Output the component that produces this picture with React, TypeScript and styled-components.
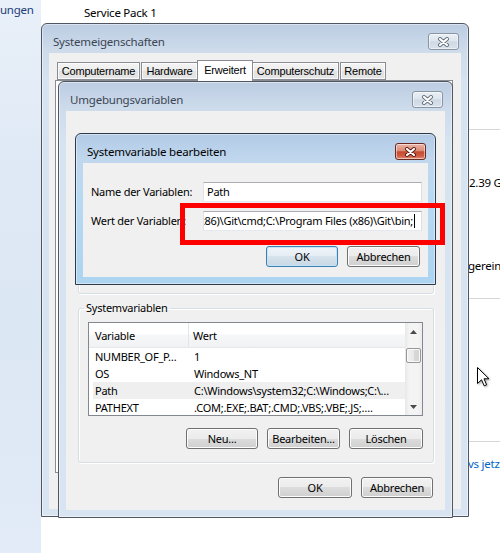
import React from "react";
import styled, { createGlobalStyle } from "styled-components";

const UI_FONT = `"Noto Sans", "Open Sans", sans-serif`;
const TAB_FONT = `"Liberation Sans", Arial, sans-serif`;

const INACTIVE_BG = `linear-gradient(180deg, #bccde2 0px, #cddbeb 26px, #d6e3f1 60px, #d8e4f2 100%)`;
const ACTIVE_BG = `linear-gradient(180deg, #b2cae5 0px, #c0d7ee 26px, #b9d9f2 60px, #acd4f0 100%)`;

const GlobalStyle = createGlobalStyle`
  *, *::before, *::after { box-sizing: border-box; }
  html, body { margin: 0; padding: 0; background: #ffffff; }
  body { font-family: ${UI_FONT}; font-size: 11px; letter-spacing: -0.25px; color: #000; }
`;

const Desktop = styled.div`
  position: relative;
  width: 500px;
  height: 553px;
  overflow: hidden;
  display: grid;
  grid-template-columns: 41px 1fr;
  background: #ffffff;
`;

const NavPane = styled.nav`
  background: linear-gradient(180deg, #e9f0f9 0%, #dfe9f5 30%, #dce7f4 60%, #e2ebf7 100%);
  padding-top: 2px;
  overflow: hidden;
`;

const NavLink = styled.span`
  display: block;
  font-size: 11.5px;
  line-height: 16px;
  color: #1e3c78;
  white-space: nowrap;
`;

const ContentPane = styled.main`
  display: grid;
  grid-template-columns: 1fr 32px;
  grid-template-rows: 129px 169px 143px 1fr;
  min-width: 0;
`;

const ServicePack = styled.div`
  grid-column: 1 / -1;
  padding: 5px 0 0 43px;
  font-size: 11.5px;
  line-height: 16px;
  white-space: nowrap;
`;

const InfoSection = styled.section<{ $pad: number }>`
  grid-column: 2;
  border-top: 1px solid #d6d6d6;
  padding-top: ${(p) => p.$pad}px;
  display: flex;
  flex-direction: column;
  overflow: hidden;
  white-space: nowrap;
`;

const InfoText = styled.span<{ $gap?: number; $link?: boolean; $indent?: number }>`
  font-size: 11.5px;
  line-height: 16px;
  margin-top: ${(p) => p.$gap ?? 0}px;
  padding-left: ${(p) => p.$indent ?? 0}px;
  color: ${(p) => (p.$link ? "#0066cc" : "#000")};
`;

/* ---------- window chrome ---------- */

const WindowFrame = styled.section<{ $x: number; $y: number; $w: number; $h: number; $active?: boolean }>`
  position: absolute;
  left: ${(p) => p.$x}px;
  top: ${(p) => p.$y}px;
  width: ${(p) => p.$w}px;
  height: ${(p) => p.$h}px;
  display: flex;
  flex-direction: column;
  padding: 0 7px 7px;
  border: 1px solid ${(p) => (p.$active ? "#2e3a48" : "#4f565f")};
  border-radius: 6px 6px 0 0;
  background: ${(p) => (p.$active ? ACTIVE_BG : INACTIVE_BG)};
  box-shadow: inset 0 0 0 1px rgba(255, 255, 255, 0.45);
`;

const TitleBar = styled.header`
  height: 29px;
  flex: none;
  display: flex;
  align-items: flex-start;
  justify-content: space-between;
  padding: 0 2px 0 4px;
`;

const Title = styled.h1<{ $active?: boolean }>`
  margin: 10px 0 0;
  font-size: 11.5px;
  letter-spacing: -0.2px;
  line-height: 16px;
  font-weight: normal;
  white-space: nowrap;
  color: ${(p) => (p.$active ? "#000000" : "#3b4553")};
`;

const CloseButton = styled.button<{ $active?: boolean }>`
  width: 31px;
  height: 17px;
  margin-top: 9px;
  padding: 0;
  display: flex;
  align-items: center;
  justify-content: center;
  border: 1px solid ${(p) => (p.$active ? "#6b2a1f" : "#8a95a3")};
  border-radius: 3px;
  background: ${(p) =>
    p.$active
      ? "linear-gradient(180deg, #e9b4a6 0%, #dc8c76 45%, #c54a30 52%, #cf5d43 80%, #e0907a 100%)"
      : "linear-gradient(180deg, #eaeff5 0%, #dde5ee 45%, #cfd9e4 52%, #d9e2ec 100%)"};
  box-shadow: inset 0 0 0 1px rgba(255, 255, 255, 0.5);
`;

const CloseGlyph: React.FC<{ active?: boolean }> = ({ active }) => (
  <svg width="13" height="10" viewBox="0 0 13 10" aria-hidden="true">
    <path
      d="M3 2 L10 8 M10 2 L3 8"
      stroke={active ? "#5a1c12" : "#66717f"}
      strokeWidth="4"
      strokeLinecap="round"
      fill="none"
    />
    <path d="M3 2 L10 8 M10 2 L3 8" stroke="#ffffff" strokeWidth="2.2" strokeLinecap="round" fill="none" />
  </svg>
);

const Client = styled.div`
  flex: 1;
  min-height: 0;
  background: #f0f0f0;
  display: flex;
  flex-direction: column;
`;

type WindowProps = {
  x: number;
  y: number;
  w: number;
  h: number;
  title: string;
  active?: boolean;
  children: React.ReactNode;
};

const Window: React.FC<WindowProps> = ({ x, y, w, h, title, active, children }) => (
  <WindowFrame $x={x} $y={y} $w={w} $h={h} $active={active}>
    <TitleBar>
      <Title $active={active}>{title}</Title>
      <CloseButton $active={active} aria-label="Schließen">
        <CloseGlyph active={active} />
      </CloseButton>
    </TitleBar>
    <Client>{children}</Client>
  </WindowFrame>
);

/* ---------- common controls ---------- */

const ButtonRow = styled.div<{ $gap?: number; $right?: number; $top?: number }>`
  display: flex;
  justify-content: flex-end;
  gap: ${(p) => p.$gap ?? 9}px;
  margin-top: ${(p) => p.$top ?? 0}px;
  margin-right: ${(p) => p.$right ?? 0}px;
  flex: none;
`;

const PushButton = styled.button<{ $w: number; $default?: boolean }>`
  width: ${(p) => p.$w}px;
  height: 21px;
  padding: 0;
  font-family: ${UI_FONT};
  font-size: 11px;
  letter-spacing: -0.25px;
  line-height: 17px;
  color: #000;
  border: 1px solid ${(p) => (p.$default ? "#3c7fb1" : "#707070")};
  border-radius: 3px;
  background: ${(p) =>
    p.$default
      ? "linear-gradient(180deg, #eef4f9 0%, #e5edf4 50%, #d6e2ec 50%, #c9d8e4 100%)"
      : "linear-gradient(180deg, #f2f2f2 0%, #ebebeb 50%, #dddddd 50%, #cfcfcf 100%)"};
  box-shadow: inset 0 0 0 1px ${(p) => (p.$default ? "#c6e4f7" : "#fcfcfc")};
`;

const TextBox = styled.div<{ $alignEnd?: boolean }>`
  height: 20px;
  min-width: 0;
  background: #ffffff;
  border: 1px solid;
  border-color: #abadb3 #dbdfe6 #e3e9ef #e2e3ea;
  display: flex;
  align-items: center;
  justify-content: ${(p) => (p.$alignEnd ? "flex-end" : "flex-start")};
  padding: ${(p) => (p.$alignEnd ? "0 6px 0 3px" : "0 3px")};
  overflow: hidden;
  white-space: nowrap;
`;

const TextValue = styled.span`
  flex: none;
  line-height: 16px;
`;

const Caret = styled.span`
  flex: none;
  width: 1px;
  height: 14px;
  margin-left: 1px;
  background: #000;
`;

/* ---------- tabs (Systemeigenschaften) ---------- */

const SEBody = styled.div`
  flex: 1;
  display: flex;
  flex-direction: column;
  padding: 7px 5px 10px 6px;
`;

const TabStrip = styled.div`
  height: 20px;
  flex: none;
  display: flex;
  align-items: flex-end;
  gap: 1px;
  padding-left: 2px;
  position: relative;
  z-index: 1;
`;

const Tab = styled.div<{ $w: number; $selected?: boolean }>`
  width: ${(p) => (p.$selected ? p.$w + 4 : p.$w)}px;
  height: ${(p) => (p.$selected ? 21 : 18)}px;
  margin: ${(p) => (p.$selected ? "0 -2px -1px" : "0")};
  display: flex;
  align-items: center;
  justify-content: center;
  padding-bottom: ${(p) => (p.$selected ? 2 : 0)}px;
  font-family: ${TAB_FONT};
  font-size: 11px;
  letter-spacing: -0.2px;
  white-space: nowrap;
  border: 1px solid #898c95;
  border-bottom: ${(p) => (p.$selected ? "none" : "1px solid #898c95")};
  background: ${(p) =>
    p.$selected ? "#ffffff" : "linear-gradient(180deg, #f4f4f4 0%, #ececec 50%, #e1e1e1 50%, #e6e6e6 100%)"};
  box-shadow: ${(p) => (p.$selected ? "none" : "inset 0 0 0 1px rgba(255,255,255,0.7)")};
  position: relative;
  z-index: ${(p) => (p.$selected ? 2 : 1)};
`;

const TabPanel = styled.div`
  height: 393px;
  flex: none;
  margin-right: 3px;
  background: #ffffff;
  border: 1px solid #898c95;
`;

/* ---------- Umgebungsvariablen ---------- */

const UVBody = styled.div`
  flex: 1;
  display: flex;
  flex-direction: column;
  padding: 23px 11px 12px 12px;
`;

const Group = styled.fieldset<{ $h?: number }>`
  margin: 0;
  min-width: 0;
  ${(p) => (p.$h ? `height: ${p.$h}px;` : "")}
  flex: none;
  border: 1px solid #d5dfe5;
  border-radius: 3px;
  padding: 6px 10px 13px 9px;
  display: flex;
  flex-direction: column;
  gap: 12px;
  box-shadow: inset 1px 1px 0 #ffffff, 1px 1px 0 #ffffff;
`;

const GroupGap = styled.div`
  height: 6px;
  flex: none;
`;

const Legend = styled.legend`
  padding: 0 2px;
  margin-left: -4px;
  line-height: 16px;
  color: #000;
`;

const ListView = styled.div<{ $h?: number }>`
  border: 1px solid #828790;
  background: #ffffff;
  display: flex;
  overflow: hidden;
  min-height: 0;
  ${(p) => (p.$h ? `height: ${p.$h}px; flex: none;` : "flex: 1;")}
`;

const ListBody = styled.div`
  flex: 1;
  min-width: 0;
  display: flex;
  flex-direction: column;
`;

const HeaderRow = styled.div`
  display: flex;
  height: 25px;
  flex: none;
  background: linear-gradient(180deg, #ffffff 0%, #ffffff 45%, #f6f7f9 50%, #f1f2f4 100%);
  border-bottom: 1px solid #e6e7e9;
`;

const HeaderCell = styled.div<{ $w?: number }>`
  ${(p) =>
    p.$w
      ? `width: ${p.$w}px; flex: none; border-right: 1px solid #e3e5e8; padding-left: 6px;`
      : "flex: 1; padding-left: 4px;"}
  display: flex;
  align-items: center;
  white-space: nowrap;
`;

const Row = styled.div<{ $selected?: boolean }>`
  display: flex;
  height: 17px;
  flex: none;
  margin-left: 4px;
  align-items: center;
  background: ${(p) => (p.$selected ? "#efefef" : "transparent")};
`;

const Cell = styled.div<{ $w?: number }>`
  ${(p) => (p.$w ? `width: ${p.$w}px; flex: none; padding-left: 2px;` : "flex: 1; min-width: 0; padding-left: 5px;")}
  line-height: 16px;
  white-space: nowrap;
  overflow: hidden;
`;

const ScrollBar = styled.div`
  width: 17px;
  flex: none;
  display: flex;
  flex-direction: column;
  background: linear-gradient(90deg, #e8e8e8 0%, #f4f4f4 25%, #f4f4f4 75%, #ececec 100%);
`;

const ScrollArrow = styled.div`
  height: 17px;
  flex: none;
  display: flex;
  align-items: center;
  justify-content: center;
`;

const ScrollTrack = styled.div`
  flex: 1;
  padding: 8px 1px 0;
`;

const Thumb = styled.div`
  height: 15px;
  border: 1px solid #979797;
  border-radius: 2px;
  background: linear-gradient(90deg, #f1f1f1 0%, #e8e8e8 50%, #d9d9d9 51%, #d3d3d3 100%);
  box-shadow: inset 0 0 0 1px #fafafa;
`;

const Arrow: React.FC<{ down?: boolean }> = ({ down }) => (
  <svg width="7" height="4" viewBox="0 0 7 4" aria-hidden="true">
    <path d={down ? "M0 0 H7 L3.5 4 Z" : "M0 4 H7 L3.5 0 Z"} fill="#4a4a4a" />
  </svg>
);

/* ---------- Systemvariable bearbeiten ---------- */

const SVBBody = styled.div`
  flex: 1;
  display: flex;
  flex-direction: column;
  padding: 19px 6px 10px 8px;
`;

const FieldGrid = styled.div`
  display: grid;
  grid-template-columns: 112px 1fr;
  row-gap: 9px;
  align-items: center;
`;

const FieldLabel = styled.label`
  line-height: 16px;
  white-space: nowrap;
`;

/* ---------- overlays ---------- */

const Annotation = styled.div`
  position: absolute;
  left: 180px;
  top: 203px;
  width: 265px;
  height: 42px;
  border: 5px solid #ff0000;
  pointer-events: none;
`;

const Pointer = styled.svg`
  position: absolute;
  left: 477px;
  top: 367px;
  filter: drop-shadow(1px 1px 1px rgba(0, 0, 0, 0.35));
`;

type Variable = { name: string; value: string; selected?: boolean };

const systemVars: Variable[] = [
  { name: "NUMBER_OF_P\u2026", value: "1" },
  { name: "OS", value: "Windows_NT" },
  { name: "Path", value: "C:\\Windows\\system32;C:\\Windows;C:\\\u2026", selected: true },
  { name: "PATHEXT", value: ".COM;.EXE;.BAT;.CMD;.VBS;.VBE;.JS;\u2026." },
];

const VariableList: React.FC<{ vars: Variable[]; h?: number }> = ({ vars, h }) => (
  <ListView $h={h}>
    <ListBody>
      <HeaderRow>
        <HeaderCell $w={100}>Variable</HeaderCell>
        <HeaderCell>Wert</HeaderCell>
      </HeaderRow>
      {vars.map((v) => (
        <Row key={v.name} $selected={v.selected}>
          <Cell $w={96}>{v.name}</Cell>
          <Cell>{v.value}</Cell>
        </Row>
      ))}
    </ListBody>
    <ScrollBar>
      <ScrollArrow>
        <Arrow />
      </ScrollArrow>
      <ScrollTrack>
        <Thumb />
      </ScrollTrack>
      <ScrollArrow>
        <Arrow down />
      </ScrollArrow>
    </ScrollBar>
  </ListView>
);

const PATH_VALUE = "C:\\Program Files (x86)\\Git\\cmd;C:\\Program Files (x86)\\Git\\bin;";

export default function App() {
  return (
    <>
      <GlobalStyle />
      <Desktop>
        <NavPane>
          <NavLink>ungen</NavLink>
        </NavPane>
        <ContentPane>
          <ServicePack>Service Pack 1</ServicePack>
          <InfoSection $pad={45}>
            <InfoText $indent={1}>2.39 G</InfoText>
            <InfoText $gap={67}>gerein</InfoText>
          </InfoSection>
          <InfoSection $pad={0} />
          <InfoSection $pad={14}>
            <InfoText $link>vs jetz</InfoText>
          </InfoSection>
        </ContentPane>

        <Window x={41} y={23} w={428} h={494} title="Systemeigenschaften">
          <SEBody>
            <TabStrip>
              <Tab $w={83}>Computername</Tab>
              <Tab $w={57}>Hardware</Tab>
              <Tab $w={52} $selected>
                Erweitert
              </Tab>
              <Tab $w={87}>Computerschutz</Tab>
              <Tab $w={46}>Remote</Tab>
            </TabStrip>
            <TabPanel />
          </SEBody>
        </Window>

        <Window x={58} y={81} w={395} h={437} title="Umgebungsvariablen">
          <UVBody>
            <Group $h={160} aria-label="Benutzervariablen" />
            <GroupGap />
            <Group>
              <Legend>Systemvariablen</Legend>
              <VariableList vars={systemVars} h={94} />
              <ButtonRow $gap={9}>
                <PushButton $w={72}>Neu...</PushButton>
                <PushButton $w={73}>Bearbeiten...</PushButton>
                <PushButton $w={74}>Löschen</PushButton>
              </ButtonRow>
            </Group>
            <ButtonRow $gap={9} $top={14} $right={1}>
              <PushButton $w={74}>OK</PushButton>
              <PushButton $w={72}>Abbrechen</PushButton>
            </ButtonRow>
          </UVBody>
        </Window>

        <Window x={75} y={133} w={361} h={152} title="Systemvariable bearbeiten" active>
          <SVBBody>
            <FieldGrid>
              <FieldLabel>Name der Variablen:</FieldLabel>
              <TextBox>
                <TextValue>Path</TextValue>
              </TextBox>
              <FieldLabel>Wert der Variablen:</FieldLabel>
              <TextBox $alignEnd>
                <TextValue>{PATH_VALUE}</TextValue>
                <Caret />
              </TextBox>
            </FieldGrid>
            <ButtonRow $gap={9} $top={15} $right={2}>
              <PushButton $w={72} $default>
                OK
              </PushButton>
              <PushButton $w={73}>Abbrechen</PushButton>
            </ButtonRow>
          </SVBBody>
        </Window>

        <Annotation />

        <Pointer width="14" height="21" viewBox="0 0 14 21" aria-hidden="true">
          <path
            d="M0.5 0.5 L0.5 16.5 L4.5 12.8 L7.2 18.8 L9.6 17.8 L7 11.8 L12 11.8 Z"
            fill="#ffffff"
            stroke="#000000"
            strokeWidth="1"
            strokeLinejoin="miter"
          />
        </Pointer>
      </Desktop>
    </>
  );
}
